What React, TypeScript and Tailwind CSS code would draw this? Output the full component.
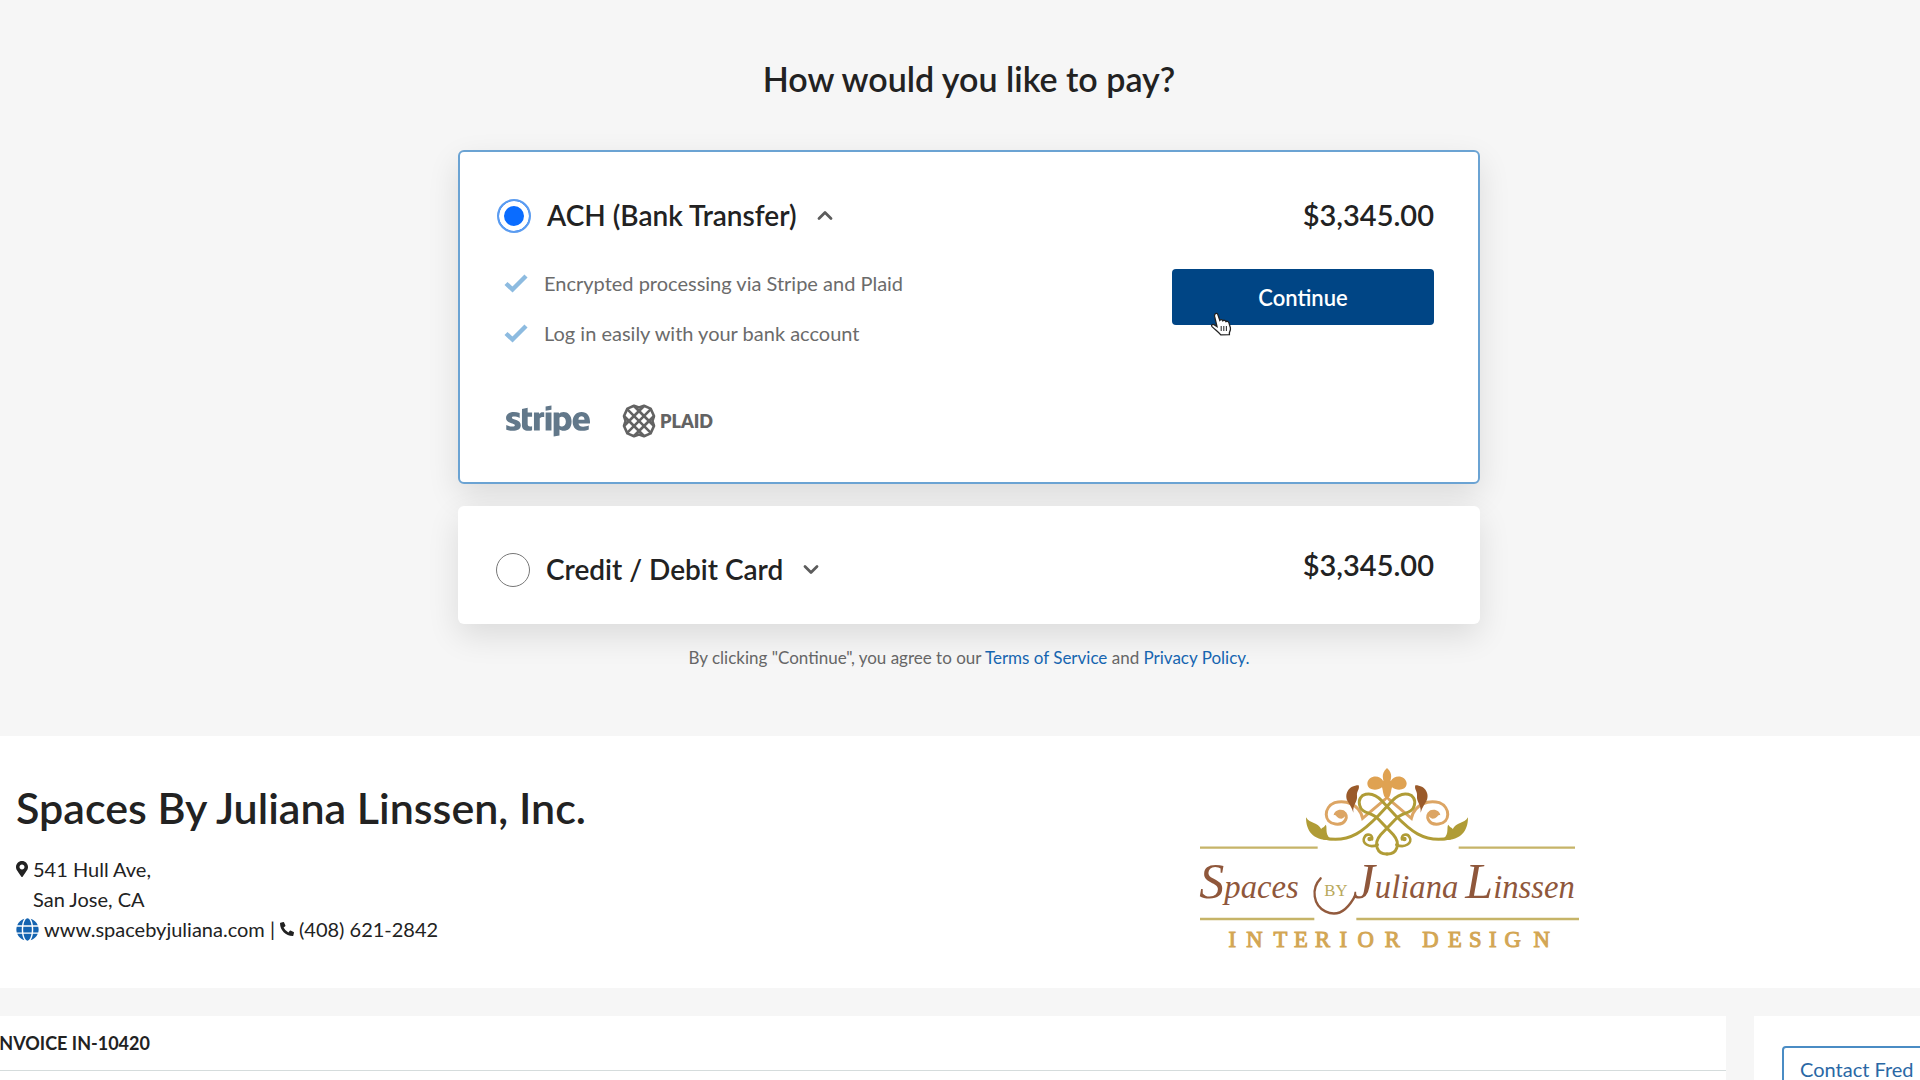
import type { ReactNode } from "react";
import { FaGlobe, FaMapMarkerAlt, FaPhoneAlt, FaStripe } from "react-icons/fa";

function Check() {
  return (
    <svg className="w-6 h-5" viewBox="0 0 24 20" fill="none" aria-hidden="true">
      <path d="M2 10.5 L8.5 16.5 L22 3" stroke="#8dbbe0" strokeWidth="4.4" />
    </svg>
  );
}

function Chevron({ up = false }: { up?: boolean }) {
  return (
    <svg className="w-4 h-3" viewBox="0 0 16 12" fill="none" aria-hidden="true">
      <path
        d={up ? "M2 9.5 L8 3.5 L14 9.5" : "M2 3.5 L8 9.5 L14 3.5"}
        stroke="#5c5c5c"
        strokeWidth="2.8"
        strokeLinecap="round"
        strokeLinejoin="round"
      />
    </svg>
  );
}

function PlaidMark() {
  return (
    <svg className="w-[34px] h-[34px]" viewBox="0 0 34 34" fill="none" stroke="#636363" strokeWidth="2.6" strokeLinejoin="round" aria-hidden="true">
      <path d="M12 1.8 L17 3.4 L22 1.8 L28.6 4.6 L32 12 L30.4 17 L32 22 L28.6 29.4 L22 32.2 L17 30.6 L12 32.2 L5.4 29.4 L2 22 L3.6 17 L2 12 L5.4 4.6 Z" />
      <path d="M5.4 5.4 L28.6 28.6 M12 2 L32 22 M2 12 L22 32" />
      <path d="M28.6 5.4 L5.4 28.6 M22 2 L2 22 M32 12 L12 32" />
    </svg>
  );
}

function HandCursor() {
  return (
    <svg className="absolute left-[38px] top-[43px] w-[22px] h-[24px] pointer-events-none" viewBox="0 0 22 24" aria-hidden="true">
      <path
        d="M5 2.2 C6 .8 7.6 1.4 8 3 L9.8 8.4 C10.6 7.2 12.2 7.4 12.8 8.8 C13.8 7.8 15.4 8.2 15.9 9.6 C17.2 8.8 18.6 9.6 19 11 L20.4 15.8 C20.8 18 19.8 19.4 19.4 20.6 L19.4 22.6 L10.8 22.8 C8.6 20 5.6 18 2 14.6 C.8 13.2 2.4 11.8 4 12.6 L7 14.6 L4.6 4.4 C4.4 3.4 4.5 2.8 5 2.2 Z"
        fill="#fff"
        stroke="#222"
        strokeWidth="1.3"
      />
      <path d="M11.2 14 V19 M13.8 14 V19 M16.4 14 V19" stroke="#333" strokeWidth="1.1" />
    </svg>
  );
}

// Left half of the crest, drawn a second time mirrored around x = 621
function CrestHalf() {
  return (
    <g fill="none" strokeLinecap="round">
      <path d="M615 148 L548 205 C538 160 495 150 464 158 C430 172 430 218 466 222 C498 226 508 196 490 186" stroke="#dca564" strokeWidth="9" />
      <path d="M494 183 C480 174 462 182 461 196 C468 190 470 206 484 206 C496 204 500 192 494 183 Z" fill="#dca564" />
      <path d="M536 106 C505 106 492 134 503 154 C509 164 516 174 520 188 C518 162 533 157 531 137 C529 124 540 118 536 106 Z" fill="#9a5a2a" />
      <path d="M810 264 C730 282 685 236 645 195 L606 153 C574 118 530 130 539 166 C545 192 576 186 594 206 L640 254 C664 282 650 313 621 312" stroke="#b09c36" strokeWidth="9" />
      <path d="M378 202 C378 246 402 275 462 270 C430 260 444 232 437 224 C432 234 424 232 424 238 C414 216 390 222 378 202 Z" fill="#b09c36" />
      <path d="M593 284 C566 296 544 278 553 262 C560 248 580 254 576 268" stroke="#b09c36" strokeWidth="8" />
      <circle cx="569" cy="267" r="7" fill="#b09c36" />
    </g>
  );
}

function SpacesLogo() {
  return (
    <svg className="w-[420px] h-[230px] shrink-0" viewBox="0 0 1260 690" role="img" aria-label="Spaces by Juliana Linssen Interior Design">
      <CrestHalf />
      <g transform="matrix(-1 0 0 1 1242 0)">
        <CrestHalf />
      </g>
      <path d="M621 54 C600 72 612 90 610 94 C600 72 564 76 562 100 C562 122 592 124 606 112 C610 124 608 138 621 150 C634 138 632 124 636 112 C650 124 680 122 680 100 C678 76 642 72 632 94 C630 90 642 72 621 54 Z" fill="#dfa252" />
      <path d="M60 293 H413 M836 293 H1185 M60 507 H403 M529 507 H1197" stroke="#c6b468" strokeWidth="7" />
      <path d="M422 385 C392 416 400 466 436 484 C476 504 506 474 526 436" fill="none" stroke="#925a3d" strokeWidth="7" strokeLinecap="round" />
      <g fill="#8f573b" fontFamily="'Liberation Serif', serif" fontStyle="italic" fontSize="98">
        <text x="58" y="444">
          <tspan fontSize="150">S</tspan>paces
        </text>
        <text x="518" y="444">
          <tspan fontSize="150">J</tspan>uliana
        </text>
        <text x="856" y="444">
          <tspan fontSize="150">L</tspan>inssen
        </text>
      </g>
      <text x="433" y="438" fill="#b9a95c" fontFamily="'Liberation Serif', serif" fontSize="50">BY</text>
      <g fill="#d3a654" stroke="#d3a654" strokeWidth="3" fontFamily="'Liberation Serif', serif" fontSize="68">
        {[..."INTERIOR"].map((c, i) => (
          <text key={i} x={[157, 223, 301, 363, 428, 490, 557, 637][i]} y="592" textAnchor="middle">{c}</text>
        ))}
        {[..."DESIGN"].map((c, i) => (
          <text key={i} x={[751, 825, 886, 938, 998, 1085][i]} y="592" textAnchor="middle">{c}</text>
        ))}
      </g>
    </svg>
  );
}

function Method({ id, label, open = false }: { id: string; label: string; open?: boolean }) {
  return (
    <div className="flex items-center h-10">
      <input
        type="radio"
        id={id}
        name="method"
        defaultChecked={open}
        className="appearance-none w-[34px] h-[34px] rounded-full border border-[#777] bg-white checked:border-2 checked:border-[#5b9cf0] checked:bg-[#0a6cff] checked:shadow-[inset_0_0_0_5px_#fff]"
      />
      <label htmlFor={id} className="ml-4 flex items-center gap-5 pb-0.5 text-[28px] leading-[38px] font-semibold text-[#222]">
        {label}
        <Chevron up={open} />
      </label>
    </div>
  );
}

function Amount() {
  return <p className="pb-0.5 text-[29px] leading-[38px] font-semibold">$3,345.00</p>;
}

function Feature({ children }: { children: ReactNode }) {
  return (
    <li className="flex items-center gap-4 h-[50px] text-xl text-[#6b6b6b]">
      <Check />
      {children}
    </li>
  );
}

export default function App() {
  return (
    <main className="h-screen overflow-hidden bg-[#f6f6f6] font-['Lato',sans-serif] text-[#222]">
      {/* Payment options */}
      <section className="flex flex-col items-center pl-[18px] pt-[59px] pb-[66px]">
        <h1 className="text-[34px] leading-10 font-semibold">How would you like to pay?</h1>

        <div className="mt-[51px] w-full max-w-[1022px] flex justify-between rounded-md border-2 border-[#6ba3d3] bg-white pl-[37px] pr-11 py-11 shadow-[0_12px_32px_rgba(0,0,0,0.11)]">
          <div>
            <Method id="ach" label="ACH (Bank Transfer)" open />
            <ul className="mt-[22px] pl-[7px]">
              <Feature>Encrypted processing via Stripe and Plaid</Feature>
              <Feature>Log in easily with your bank account</Feature>
            </ul>
            <div className="mt-[46px] pl-[9px] flex items-center">
              <FaStripe className="w-[84px] h-[34px]" viewBox="0 112 640 288" preserveAspectRatio="none" color="#62788a" title="stripe" />
              <div className="ml-8 flex items-center gap-1 text-lg font-extrabold text-[#636363]">
                <PlaidMark />
                PLAID
              </div>
            </div>
          </div>
          <div className="text-right">
            <Amount />
            <div className="relative mt-[33px]">
              <button className="w-[262px] h-14 rounded bg-[#004585] text-[22px] font-semibold text-white">Continue</button>
              <HandCursor />
            </div>
          </div>
        </div>

        <div className="mt-[22px] w-full max-w-[1022px] flex justify-between rounded-md bg-white pl-[38px] pr-[46px] pt-10 pb-[34px] shadow-[0_12px_32px_rgba(0,0,0,0.11)]">
          <div className="pt-1">
            <Method id="card" label="Credit / Debit Card" />
          </div>
          <Amount />
        </div>

        <p className="mt-[22px] text-[17px] leading-6 text-[#666]">
          By clicking "Continue", you agree to our{" "}
          <a href="#terms" className="text-[#1665b0]">Terms of Service</a> and{" "}
          <a href="#privacy" className="text-[#1665b0]">Privacy Policy.</a>
        </p>
      </section>

      {/* Company details */}
      <section className="flex justify-between bg-white pl-4 pr-80 pt-[14px] pb-2">
        <div className="pt-[33px]">
          <h2 className="text-[43px] leading-[50px] font-semibold">Spaces By Juliana Linssen, Inc.</h2>
          <address className="mt-[21px] not-italic text-xl leading-[30px]">
            <p className="flex items-center gap-[5px]">
              <FaMapMarkerAlt className="w-3 h-4" />
              541 Hull Ave,
            </p>
            <p className="pl-[17px]">San Jose, CA</p>
            <p className="flex items-center gap-[5px]">
              <FaGlobe className="w-[23px] h-[23px] text-[#1463b0]" />
              <span>www.spacebyjuliana.com |</span>
              <FaPhoneAlt className="w-[14px] h-[14px]" />
              <span>(408) 621-2842</span>
            </p>
          </address>
        </div>
        <SpacesLogo />
      </section>

      {/* Invoice */}
      <div className="mt-7 flex items-stretch gap-7 h-80">
        <section className="flex-1 bg-white">
          <h3 className="h-[55px] border-b border-[#d5dcdc] text-lg leading-[54px] font-bold">
            <span className="-ml-1.5">INVOICE IN-10420</span>
          </h3>
        </section>
        <aside className="w-[166px] overflow-hidden bg-white pl-7 pt-[30px]">
          <button className="h-[46px] w-[260px] rounded border-2 border-[#4a8cc4] pl-4 text-left text-xl leading-6 text-[#2a68a5]">Contact Fred</button>
        </aside>
      </div>
    </main>
  );
}
